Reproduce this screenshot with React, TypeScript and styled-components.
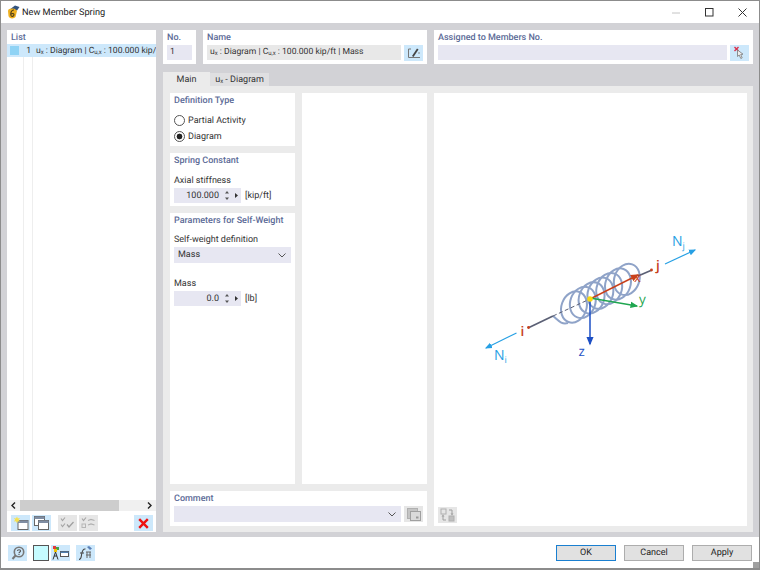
import React from "react";
import styled, { createGlobalStyle } from "styled-components";

const GlobalStyle = createGlobalStyle`
  html, body {
    margin: 0;
    padding: 0;
    background: #fff;
  }
  body {
    font-family: Roboto, "Open Sans", "Liberation Sans", sans-serif;
    font-size: 9px;
    color: #333;
    text-rendering: geometricPrecision;
  }
  sub {
    font-size: 6px;
    line-height: 0;
    vertical-align: -1px;
  }
`;

const Window = styled.div`
  width: 760px;
  height: 570px;
  box-sizing: border-box;
  display: flex;
  flex-direction: column;
  background: #fff;
  border: 1px solid #8c8c8c;
  border-bottom-width: 2px;
  overflow: hidden;
`;

const TitleBar = styled.div`
  height: 22px;
  display: flex;
  align-items: center;
  padding-left: 6px;
  gap: 2px;
  font-size: 9.2px;
  color: #222;
`;

const TitleText = styled.span`
  flex: 1;
`;

const WindowButtons = styled.div`
  display: flex;
  align-items: center;
`;

const WindowButton = styled.div`
  width: 33px;
  height: 22px;
  display: flex;
  align-items: center;
  justify-content: center;
`;

const Body = styled.div`
  height: 514px;
  box-sizing: border-box;
  background: #d2d2d6;
  padding: 7px 6px 5px;
  display: flex;
  gap: 7px;
`;

const Panel = styled.div`
  background: #fff;
  box-sizing: border-box;
`;

const ListPanel = styled(Panel)`
  width: 149px;
  display: flex;
  flex-direction: column;
`;

const PanelTitle = styled.div`
  height: 14px;
  padding: 2px 0 0 4px;
  box-sizing: border-box;
  font-size: 9px;
  font-weight: 500;
  line-height: 12px;
  color: #5c6b97;
`;

const ListRow = styled.div`
  height: 13px;
  flex: none;
  display: flex;
  align-items: center;
  background: #cde8fb;
  font-size: 8.6px;
  white-space: nowrap;
  overflow: hidden;
`;

const ListSwatch = styled.span`
  width: 9px;
  height: 9px;
  margin: 0 0 0 3px;
  flex: none;
  background: #8fd3f5;
`;

const ListNumber = styled.span`
  width: 12px;
  flex: none;
  text-align: right;
  margin-right: 5px;
`;

const ListBody = styled.div`
  flex: 1;
  display: flex;
  padding-left: 16px;
`;

const TreeLine = styled.div`
  width: 8px;
  border-left: 1px solid #eeeeee;
`;

const ScrollBar = styled.div`
  height: 11px;
  flex: none;
  display: flex;
  align-items: center;
  background: #f0f0f0;
`;

const ScrollArrow = styled.div`
  width: 13px;
  flex: none;
  display: flex;
  align-items: center;
  justify-content: center;
`;

const ScrollThumb = styled.div`
  width: 99px;
  height: 11px;
  background: #cdcdcd;
`;

const ScrollRest = styled.div`
  flex: 1;
`;

const ListTools = styled.div`
  height: 21px;
  flex: none;
  box-sizing: border-box;
  padding: 4px 4px 0;
  display: flex;
  gap: 2px;
`;

const IconButton = styled.div<{ $off?: boolean }>`
  width: 19px;
  height: 16px;
  flex: none;
  display: flex;
  align-items: center;
  justify-content: center;
  background: ${(p) => (p.$off ? "#e6e6e6" : "#cde8fb")};
`;

const ToolGap = styled.div<{ $w: number }>`
  width: ${(p) => p.$w}px;
  flex: none;
`;

const MainColumn = styled.div`
  flex: 1;
  display: flex;
  flex-direction: column;
`;

const TopRow = styled.div`
  height: 34px;
  display: flex;
  gap: 7px;
`;

const TopCell = styled(Panel)<{ $w: number }>`
  width: ${(p) => p.$w}px;
  display: flex;
  flex-direction: column;
`;

const FieldRow = styled.div`
  display: flex;
  gap: 3px;
  padding: 1px 4px 0;
`;

const Field = styled.div<{ $grey?: boolean }>`
  flex: 1;
  height: 15px;
  line-height: 15px;
  padding-left: 3px;
  font-size: 8.6px;
  background: ${(p) => (p.$grey ? "#e8e8e8" : "#e7e7f2")};
  white-space: nowrap;
`;

const Tabs = styled.div`
  display: flex;
  margin-top: 8px;
  height: 14px;
`;

const Tab = styled.div<{ $active?: boolean }>`
  box-sizing: border-box;
  width: ${(p) => (p.$active ? 47 : 59)}px;
  height: ${(p) => (p.$active ? 14 : 13)}px;
  margin-top: ${(p) => (p.$active ? 0 : 1)}px;
  line-height: ${(p) => (p.$active ? 16 : 14)}px;
  text-align: center;
  background: ${(p) => (p.$active ? "#ebebeb" : "#dfdfe1")};
`;

const TabBody = styled.div`
  flex: 1;
  background: #ebebeb;
  padding: 7px 6px 6px 7px;
  display: flex;
  gap: 7px;
`;

const LeftPart = styled.div`
  width: 257px;
  flex: none;
  display: flex;
  flex-direction: column;
  gap: 7px;
`;

const Columns = styled.div`
  flex: 1;
  display: flex;
  gap: 7px;
`;

const SettingsColumn = styled.div`
  width: 125px;
  display: flex;
  flex-direction: column;
  gap: 7px;
`;

const Group = styled(Panel)<{ $h?: number }>`
  ${(p) => (p.$h ? `height: ${p.$h}px;` : "flex: 1;")}
`;

const EmptyColumn = styled(Panel)`
  width: 125px;
`;

const RadioRow = styled.div<{ $gap: number }>`
  display: flex;
  align-items: center;
  gap: 3px;
  padding-left: 4px;
  height: 13px;
  margin-top: ${(p) => p.$gap}px;
`;

const Radio = styled.span<{ $on?: boolean }>`
  width: 9px;
  height: 9px;
  box-sizing: content-box;
  flex: none;
  border: 1px solid #555;
  border-radius: 50%;
  background: ${(p) =>
    p.$on ? "radial-gradient(circle, #222 0 2.6px, #fff 3.2px)" : "#fff"};
`;

const FieldLabel = styled.div<{ $top: number }>`
  height: 12px;
  line-height: 12px;
  padding-left: 4px;
  margin-top: ${(p) => p.$top}px;
`;

const SpinRow = styled.div`
  display: flex;
  align-items: center;
  margin: 1px 0 0 4px;
  height: 15px;
`;

const SpinBox = styled.div`
  width: 67px;
  height: 15px;
  display: flex;
  align-items: center;
  background: #e7e7f2;
`;

const SpinValue = styled.span`
  width: 45px;
  text-align: right;
`;

const SpinArrows = styled.div`
  width: 15px;
  margin-left: 5px;
  display: flex;
  justify-content: center;
`;

const SpinUnit = styled.span`
  margin-left: 4px;
`;

const SelectBox = styled.div`
  height: 16px;
  flex: 1;
  display: flex;
  align-items: center;
  justify-content: space-between;
  padding: 0 5px 0 4px;
  background: #e7e7f2;
`;

const SelectRow = styled.div`
  display: flex;
  gap: 3px;
  padding: 1px 4px 0;
`;

const CommentPanel = styled(Panel)`
  height: 35px;
`;

const Preview = styled(Panel)`
  flex: 1;
  display: flex;
  flex-direction: column;
`;

const PreviewCanvas = styled.div`
  flex: 1;
  min-height: 0;
`;

const PreviewTools = styled.div`
  height: 19px;
  padding-left: 4px;
`;

const Footer = styled.div`
  flex: 1;
  display: flex;
  align-items: flex-start;
  padding: 8px 7px 0;
`;

const ColorSwatch = styled.div`
  width: 16px;
  height: 16px;
  box-sizing: border-box;
  flex: none;
  background: #c6fbff;
  border: 1px solid #555;
`;

const FooterButtons = styled.div`
  margin-left: auto;
  display: flex;
  gap: 8px;
`;

const DialogButton = styled.div<{ $primary?: boolean }>`
  box-sizing: border-box;
  width: 60px;
  height: 16px;
  line-height: 14px;
  text-align: center;
  background: #e1e1e1;
  color: #222;
  border: ${(p) => (p.$primary ? "1.5px solid #1a7fd0" : "1px solid #adadad")};
`;

const Grip = styled.div`
  position: absolute;
  right: 1px;
  bottom: 2px;
  width: 6px;
  height: 6px;
  background-image: radial-gradient(#999 0.7px, transparent 0.8px);
  background-size: 2px 2px;
`;

const WindowFrame = styled.div`
  position: relative;
`;

const Icon = styled.svg`
  display: block;
`;

const Ux = () => (
  <>
    u<sub>x</sub>
  </>
);

const Cux = () => (
  <>
    C<sub>u,x</sub>
  </>
);

const Logo = () => (
  <Icon width="13" height="14" viewBox="0 0 13 14">
    <path d="M2 5 L8 0.5 L12.5 2 L10 5.5 Z" fill="#33547f" />
    <path d="M1 6 C1 3.5 5 3 8 4 L10 6 L8.5 12 C7 14 2 14 1.5 11 Z" fill="#eeb020" />
    <path d="M7 5 C4.5 4.8 3.5 7.5 3.8 10 C4.2 12 7 11.8 7 9.8 C7 8.2 5 8.2 4.2 9.2" fill="none" stroke="#4a3a18" strokeWidth="1.1" />
  </Icon>
);

const EditIcon = () => (
  <Icon width="14" height="12" viewBox="0 0 14 12">
    <path d="M4 2 H1.5 V10.5 H13" fill="none" stroke="#777" strokeWidth="1" />
    <path d="M5 9 L10 1.5 L11.5 2.5 L6.5 10 Z" fill="#444" />
    <circle cx="12" cy="6" r="0.7" fill="#666" />
  </Icon>
);

const PickIcon = () => (
  <Icon width="13" height="14" viewBox="0 0 13 14">
    <path d="M1.5 1 L5.5 5 M5.5 1 L1.5 5" stroke="#d9304a" strokeWidth="1.4" />
    <path d="M4.5 4 L4.5 10.5 L6.2 9 L7.8 12.5 L9.2 11.8 L7.7 8.5 L10 8.2 Z" fill="#eee" stroke="#777" strokeWidth="0.8" />
  </Icon>
);

const NewIcon = () => (
  <Icon width="16" height="14" viewBox="0 0 16 14">
    <rect x="5" y="4.5" width="10" height="9" fill="#fff" stroke="#666" />
    <rect x="5" y="4.5" width="10" height="2.5" fill="#7f8da3" />
    <path d="M4 0.5 L4.8 2.4 L7 2 L5.6 3.8 L7 5.6 L4.8 5.2 L4 7.2 L3 5.2 L0.8 5.6 L2.2 3.8 L0.8 2 L3 2.4 Z" fill="#f7e14a" />
  </Icon>
);

const CopyIcon = () => (
  <Icon width="15" height="14" viewBox="0 0 15 14">
    <rect x="0.5" y="0.5" width="10" height="9" fill="#fff" stroke="#666" />
    <rect x="0.5" y="0.5" width="10" height="2.5" fill="#7f8da3" />
    <rect x="4.5" y="4.5" width="10" height="9" fill="#fff" stroke="#666" />
    <rect x="4.5" y="4.5" width="10" height="2.5" fill="#7f8da3" />
  </Icon>
);

const CheckAllIcon = () => (
  <Icon width="15" height="12" viewBox="0 0 15 12">
    <path d="M1 1.5 L2.5 3.5 L5 0.5 M1 7.5 L2.5 9.5 L5 6.5" fill="none" stroke="#a5a5a5" strokeWidth="1.1" />
    <path d="M7 7.5 L9 10 L13.5 5" fill="none" stroke="#a0a0a0" strokeWidth="1.3" />
  </Icon>
);

const UncheckIcon = () => (
  <Icon width="15" height="12" viewBox="0 0 15 12">
    <path d="M1 1.5 L2.5 3.5 L5 0.5" fill="none" stroke="#a5a5a5" strokeWidth="1.1" />
    <rect x="1" y="7" width="3.5" height="3.5" fill="none" stroke="#b5b5b5" />
    <path d="M7 3.5 L10 2.5 L13.5 3.5 M7 8 L10 7 L13.5 8" fill="none" stroke="#b0b0b0" strokeWidth="1.3" />
  </Icon>
);

const DeleteIcon = () => (
  <Icon width="11" height="11" viewBox="0 0 11 11">
    <path d="M1.2 1.2 L9.8 9.8 M9.8 1.2 L1.2 9.8" stroke="#ee1111" strokeWidth="2.4" />
  </Icon>
);

const HelpIcon = () => (
  <Icon width="14" height="14" viewBox="0 0 14 14">
    <circle cx="8" cy="6" r="4.7" fill="none" stroke="#777" strokeWidth="1.6" />
    <path d="M4.5 9.5 L1.5 13" stroke="#777" strokeWidth="2" />
    <path d="M6.4 4.9 C6.5 3.3 9.6 3.3 9.6 4.9 C9.6 6 8 6 8 7.2 M8 8 V9.1" fill="none" stroke="#555" strokeWidth="1.1" />
  </Icon>
);

const TreeIcon = () => (
  <Icon width="17" height="14" viewBox="0 0 17 14">
    <rect x="1" y="0" width="3" height="3" fill="#e23b3b" />
    <rect x="4" y="1" width="3" height="3" fill="#43a047" />
    <rect x="2" y="3" width="3" height="3" fill="#f2c200" />
    <path d="M3.5 6 L1 13.5 M3.5 6 L6 13.5 M2 10 H5" stroke="#333" strokeWidth="1" fill="none" />
    <rect x="8.5" y="5.5" width="8" height="5" fill="#fff" stroke="#555" />
    <rect x="8.5" y="5.5" width="8" height="1.5" fill="#4f7fb0" />
  </Icon>
);

const FormulaIcon = () => (
  <Icon width="16" height="14" viewBox="0 0 16 14">
    <path d="M1 13.5 C3.5 13.5 3 11 3.8 7.5 C4.4 4.5 5 2.5 7.5 3" fill="none" stroke="#444" strokeWidth="1.1" />
    <path d="M2 7 H6" stroke="#444" strokeWidth="1" />
    <path d="M8 6 H13 M8 9 H13 M9 6 V12 M12 6 V12" stroke="#666" strokeWidth="1" />
    <path d="M9 1 L11 0 L14 2.5 L12 4 Z" fill="#5a7fb5" />
  </Icon>
);

const CloneIcon = () => (
  <Icon width="14" height="13" viewBox="0 0 14 13">
    <rect x="0.5" y="0.5" width="10" height="10" fill="#c4c4c4" stroke="#b0b0b0" />
    <rect x="3.5" y="3.5" width="10" height="9" fill="#dadada" stroke="#a0a0a0" />
    <rect x="9" y="8.5" width="2.5" height="2" fill="#999" />
  </Icon>
);

const SwapIcon = () => (
  <Icon width="15" height="14" viewBox="0 0 15 14">
    <rect x="1" y="1" width="5" height="5" fill="none" stroke="#b0b0b0" />
    <rect x="9" y="8" width="5" height="5" fill="#c0c0c0" stroke="#b0b0b0" />
    <path d="M9 2 H12 V6 M6 12 H3 V8" fill="none" stroke="#a0a0a0" strokeWidth="1" />
    <path d="M10.5 5.5 L12 7.5 L13.5 5.5 Z M1.5 8.5 L3 6.5 L4.5 8.5 Z" fill="#a0a0a0" />
  </Icon>
);

const SpinnerIcon = () => (
  <Icon width="15" height="11" viewBox="0 0 15 11">
    <path d="M3 1 L5 3.5 H1 Z M3 10 L5 7.5 H1 Z" fill="#555" />
    <path d="M11 3 L14 5.5 L11 8 Z" fill="#333" />
  </Icon>
);

const Chevron = () => (
  <Icon width="8" height="5" viewBox="0 0 8 5">
    <path d="M0.5 0.5 L4 4 L7.5 0.5" fill="none" stroke="#555" strokeWidth="1" />
  </Icon>
);

const ScrollChevron = ({ flip }: { flip?: boolean }) => (
  <Icon width="5" height="7" viewBox="0 0 5 7">
    <path d={flip ? "M1 0.5 L4 3.5 L1 6.5" : "M4 0.5 L1 3.5 L4 6.5"} fill="none" stroke="#222" strokeWidth="1.4" />
  </Icon>
);

// the spring: one tilted ellipse per turn, running up the member axis
const coilTurns = Array.from({ length: 7 }, (_, i) => ({
  cx: 574 + i * 8.8,
  cy: 307 - i * 4.6,
}));

const MemberDiagram = () => (
  <Icon width="313" height="414" viewBox="434 93 313 414">
    <defs>
      <marker id="red" markerWidth="6" markerHeight="6" refX="5" refY="3" orient="auto">
        <path d="M0 0.5 L6 3 L0 5.5 Z" fill="#c8401c" />
      </marker>
      <marker id="green" markerWidth="6" markerHeight="6" refX="5" refY="3" orient="auto">
        <path d="M0 0.5 L6 3 L0 5.5 Z" fill="#1fa650" />
      </marker>
      <marker id="navy" markerWidth="6" markerHeight="6" refX="5" refY="3" orient="auto">
        <path d="M0 0.5 L6 3 L0 5.5 Z" fill="#1d4fc4" />
      </marker>
      <marker id="sky" markerWidth="6" markerHeight="6" refX="5" refY="3" orient="auto">
        <path d="M0 0.5 L6 3 L0 5.5 Z" fill="#27a0e4" />
      </marker>
    </defs>
    {coilTurns.map((t) => (
      <ellipse
        key={t.cx}
        cx={t.cx}
        cy={t.cy}
        rx="12.5"
        ry="16"
        transform={`rotate(20 ${t.cx} ${t.cy})`}
        fill="none"
        stroke="#8fa3c8"
        strokeWidth="2"
      />
    ))}
    <path d="M553 316 C558 320 561 325 568 323" fill="none" stroke="#8fa3c8" strokeWidth="2" />
    <path d="M528 328 L553 316" stroke="#5b6075" strokeWidth="1.7" />
    <path d="M553 316 L590 299" stroke="#5b6075" strokeWidth="1" strokeDasharray="4 2.5" />
    <path d="M638 276 L652 270" stroke="#5b6075" strokeWidth="1.7" />
    <circle cx="528.5" cy="327.5" r="1.4" fill="#c8401c" />
    <circle cx="651.5" cy="270" r="1.4" fill="#c8401c" />
    <path d="M590 299 L638 275" stroke="#c8401c" strokeWidth="1.4" markerEnd="url(#red)" />
    <path d="M590 298 L637 306" stroke="#1fa650" strokeWidth="1.3" markerEnd="url(#green)" />
    <path d="M590 299 L590 344" stroke="#1d4fc4" strokeWidth="1.5" markerEnd="url(#navy)" />
    <circle cx="590" cy="299" r="2.8" fill="#f8d90f" />
    <path d="M516.5 333 L486 348" stroke="#27a0e4" strokeWidth="1.2" markerEnd="url(#sky)" />
    <path d="M665 264 L695 250" stroke="#27a0e4" strokeWidth="1.2" markerEnd="url(#sky)" />
    <g fontFamily="'Open Sans', sans-serif">
      <text x="520.5" y="336" fontSize="13.5" fontWeight="600" fill="#c8401c">i</text>
      <text x="656" y="270" fontSize="13.5" fontWeight="600" fill="#c8401c">j</text>
      <text x="634" y="282" fontSize="13" fill="#c8401c">x</text>
      <text x="639" y="304" fontSize="13.5" fill="#1fa650">y</text>
      <text x="578.5" y="356" fontSize="13.5" fill="#1d4fc4">z</text>
      <text x="494" y="360" fontSize="14" fill="#27a0e4">
        N<tspan fontSize="9" dy="3">i</tspan>
      </text>
      <text x="672" y="246" fontSize="14" fill="#27a0e4">
        N<tspan fontSize="9" dy="3">j</tspan>
      </text>
    </g>
  </Icon>
);

const Spinner = ({ value, unit }: { value: string; unit: string }) => (
  <SpinRow>
    <SpinBox>
      <SpinValue>{value}</SpinValue>
      <SpinArrows>
        <SpinnerIcon />
      </SpinArrows>
    </SpinBox>
    <SpinUnit>{unit}</SpinUnit>
  </SpinRow>
);

const App = () => {
  return (
    <WindowFrame>
      <GlobalStyle />
      <Window>
        <TitleBar>
          <Logo />
          <TitleText>New Member Spring</TitleText>
          <WindowButtons>
            <WindowButton>
              <Icon width="9" height="9" viewBox="0 0 9 9">
                <path d="M0 5 H8" stroke="#c4c4c4" strokeWidth="1" />
              </Icon>
            </WindowButton>
            <WindowButton>
              <Icon width="9" height="9" viewBox="0 0 9 9">
                <rect x="0.5" y="0.5" width="7.5" height="7.5" fill="none" stroke="#333" />
              </Icon>
            </WindowButton>
            <WindowButton>
              <Icon width="9" height="9" viewBox="0 0 9 9">
                <path d="M0.5 0.5 L8.5 8.5 M8.5 0.5 L0.5 8.5" stroke="#333" strokeWidth="1" />
              </Icon>
            </WindowButton>
          </WindowButtons>
        </TitleBar>
        <Body>
          <ListPanel>
            <PanelTitle>List</PanelTitle>
            <ListRow>
              <ListSwatch />
              <ListNumber>1</ListNumber>
              <span>
                <Ux /> : Diagram | <Cux /> : 100.000 kip/
              </span>
            </ListRow>
            <ListBody>
              <TreeLine />
              <TreeLine />
            </ListBody>
            <ScrollBar>
              <ScrollArrow><ScrollChevron /></ScrollArrow>
              <ScrollThumb />
              <ScrollRest />
              <ScrollArrow><ScrollChevron flip /></ScrollArrow>
            </ScrollBar>
            <ListTools>
              <IconButton><NewIcon /></IconButton>
              <IconButton><CopyIcon /></IconButton>
              <ToolGap $w={3} />
              <IconButton $off><CheckAllIcon /></IconButton>
              <IconButton $off><UncheckIcon /></IconButton>
              <ToolGap $w={32} />
              <IconButton><DeleteIcon /></IconButton>
            </ListTools>
          </ListPanel>
          <MainColumn>
            <TopRow>
              <TopCell $w={33}>
                <PanelTitle>No.</PanelTitle>
                <FieldRow>
                  <Field>1</Field>
                </FieldRow>
              </TopCell>
              <TopCell $w={224}>
                <PanelTitle>Name</PanelTitle>
                <FieldRow>
                  <Field $grey>
                    <Ux /> : Diagram | <Cux /> : 100.000 kip/ft | Mass
                  </Field>
                  <IconButton><EditIcon /></IconButton>
                </FieldRow>
              </TopCell>
              <TopCell $w={319}>
                <PanelTitle>Assigned to Members No.</PanelTitle>
                <FieldRow>
                  <Field />
                  <IconButton><PickIcon /></IconButton>
                </FieldRow>
              </TopCell>
            </TopRow>
            <Tabs>
              <Tab $active>Main</Tab>
              <Tab>
                <Ux /> - Diagram
              </Tab>
            </Tabs>
            <TabBody>
              <LeftPart>
                <Columns>
                  <SettingsColumn>
                    <Group $h={53}>
                      <PanelTitle>Definition Type</PanelTitle>
                      <RadioRow $gap={7}>
                        <Radio />
                        Partial Activity
                      </RadioRow>
                      <RadioRow $gap={3}>
                        <Radio $on />
                        Diagram
                      </RadioRow>
                    </Group>
                    <Group $h={53}>
                      <PanelTitle>Spring Constant</PanelTitle>
                      <FieldLabel $top={8}>Axial stiffness</FieldLabel>
                      <Spinner value="100.000" unit="[kip/ft]" />
                    </Group>
                    <Group>
                      <PanelTitle>Parameters for Self-Weight</PanelTitle>
                      <FieldLabel $top={7}>Self-weight definition</FieldLabel>
                      <SelectRow>
                        <SelectBox>
                          Mass
                          <Chevron />
                        </SelectBox>
                      </SelectRow>
                      <FieldLabel $top={15}>Mass</FieldLabel>
                      <Spinner value="0.0" unit="[lb]" />
                    </Group>
                  </SettingsColumn>
                  <EmptyColumn />
                </Columns>
                <CommentPanel>
                  <PanelTitle>Comment</PanelTitle>
                  <SelectRow>
                    <SelectBox>
                      <span />
                      <Chevron />
                    </SelectBox>
                    <IconButton $off><CloneIcon /></IconButton>
                  </SelectRow>
                </CommentPanel>
              </LeftPart>
              <Preview>
                <PreviewCanvas>
                  <MemberDiagram />
                </PreviewCanvas>
                <PreviewTools>
                  <IconButton $off><SwapIcon /></IconButton>
                </PreviewTools>
              </Preview>
            </TabBody>
          </MainColumn>
        </Body>
        <Footer>
          <IconButton><HelpIcon /></IconButton>
          <ToolGap $w={6} />
          <ColorSwatch />
          <ToolGap $w={2} />
          <IconButton><TreeIcon /></IconButton>
          <ToolGap $w={6} />
          <IconButton><FormulaIcon /></IconButton>
          <FooterButtons>
            <DialogButton $primary>OK</DialogButton>
            <DialogButton>Cancel</DialogButton>
            <DialogButton>Apply</DialogButton>
          </FooterButtons>
        </Footer>
      </Window>
      <Grip />
    </WindowFrame>
  );
};

export default App;
